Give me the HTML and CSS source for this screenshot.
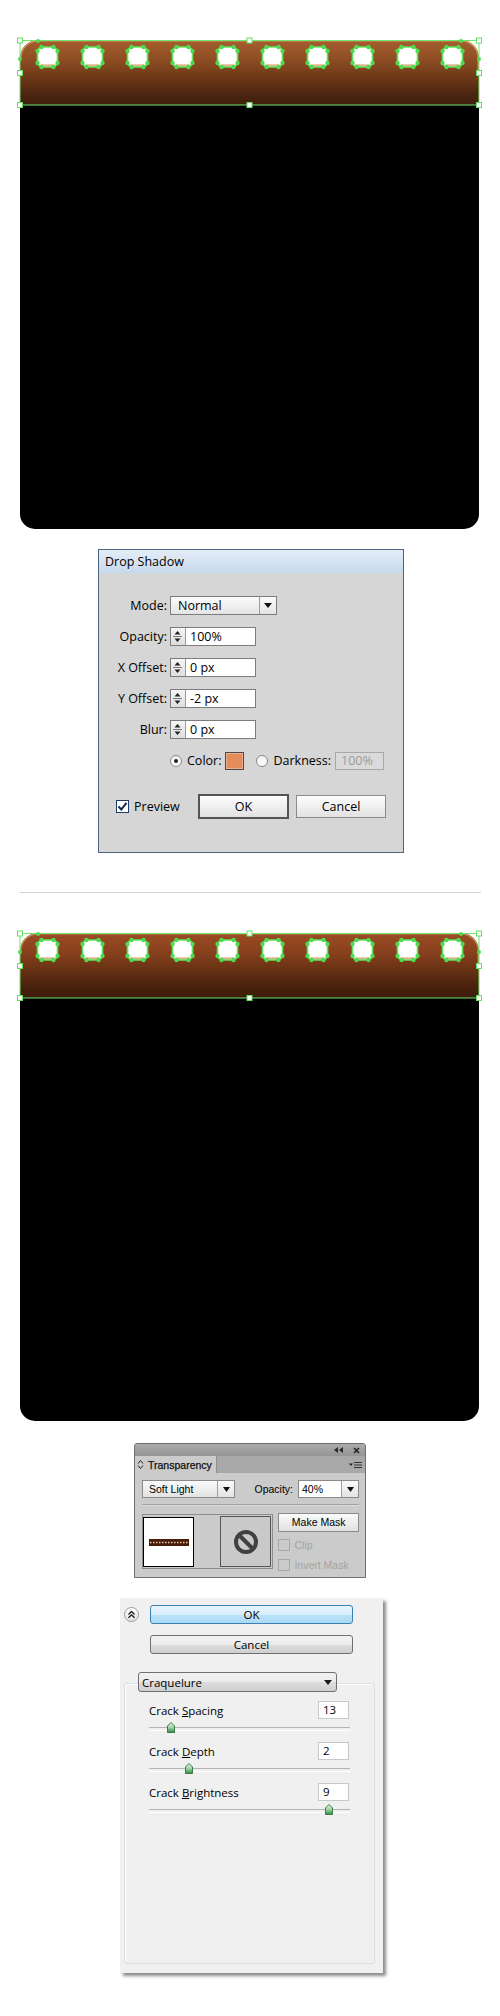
FILE: index.html
```html
<!DOCTYPE html>
<html>
<head>
<meta charset="utf-8">
<link rel="stylesheet" href="styles.css">
</head>
<body>
<div class="page">

  <div class="film">
    <svg class="film-head" width="459" height="65" viewBox="0 0 459 65">
      <defs>
        <linearGradient id="brA" x1="0" y1="0" x2="0" y2="1">
          <stop offset="0" stop-color="#a65e2e"/>
          <stop offset="0.3" stop-color="#8e4d23"/>
          <stop offset="0.6" stop-color="#6b3617"/>
          <stop offset="0.85" stop-color="#4a2410"/>
          <stop offset="1" stop-color="#40200d"/>
        </linearGradient>
        <g id="holeA">
          <rect x="0" y="0" width="20" height="20" rx="5" fill="#fff"/>
          <rect x="3" y="17.3" width="14" height="2.4" fill="#e2b48a"/>
          <rect x="0" y="0" width="20" height="20" rx="5" fill="none" stroke="#5fe35f" stroke-width="1.6"/>
          <circle cx="4" cy="0" r="2.2" fill="#4fdb4f"/><circle cx="16" cy="0" r="2.2" fill="#4fdb4f"/>
          <circle cx="20" cy="4" r="2.2" fill="#4fdb4f"/><circle cx="20" cy="16" r="2.2" fill="#4fdb4f"/>
          <circle cx="16" cy="20" r="2.2" fill="#4fdb4f"/><circle cx="4" cy="20" r="2.2" fill="#4fdb4f"/>
          <circle cx="0" cy="16" r="2.2" fill="#4fdb4f"/><circle cx="0" cy="4" r="2.2" fill="#4fdb4f"/>
        </g>
        <rect id="hdlA" x="-2.5" y="-2.5" width="5" height="5" fill="#fff" stroke="#5fe35f" stroke-width="1"/>
      </defs>
      <path d="M0,65 V18 A18,18 0 0 1 18,0 H441 A18,18 0 0 1 459,18 V65 Z" fill="url(#brA)"/>
      <path d="M0.8,20 V18 A17.2,17.2 0 0 1 18,0.8 H441 A17.2,17.2 0 0 1 458.2,18 V30" fill="none" stroke="#c99a62" stroke-width="1.4"/>
      <use href="#holeA" x="17.5" y="7"/><use href="#holeA" x="62.5" y="7"/>
      <use href="#holeA" x="107.5" y="7"/><use href="#holeA" x="152.5" y="7"/>
      <use href="#holeA" x="197.5" y="7"/><use href="#holeA" x="242.5" y="7"/>
      <use href="#holeA" x="287.5" y="7"/><use href="#holeA" x="332.5" y="7"/>
      <use href="#holeA" x="377.5" y="7"/><use href="#holeA" x="422.5" y="7"/>
      <rect x="0" y="0.5" width="459" height="64.5" fill="none" stroke="#6fe46f" stroke-width="1"/>
      <circle cx="18" cy="1" r="2" fill="#4fdb4f"/><circle cx="441" cy="1" r="2" fill="#4fdb4f"/>
      <circle cx="0" cy="19" r="2" fill="#4fdb4f"/><circle cx="459" cy="19" r="2" fill="#4fdb4f"/>
      <use href="#hdlA" x="0" y="0.5"/><use href="#hdlA" x="229.5" y="0.5"/><use href="#hdlA" x="459" y="0.5"/>
      <use href="#hdlA" x="0" y="33"/><use href="#hdlA" x="459" y="33"/>
      <use href="#hdlA" x="0" y="65"/><use href="#hdlA" x="229.5" y="65"/><use href="#hdlA" x="459" y="65"/>
    </svg>
    <div class="film-body"></div>
  </div>

  <div class="ds">
    <div class="ds-title">Drop Shadow</div>
    <div class="ds-body">
      <div class="ds-row">
        <span class="ds-label">Mode:</span>
        <div class="ds-select">
          <span class="ds-select-text">Normal</span>
          <span class="ds-select-btn"><svg width="8" height="5" viewBox="0 0 8 5"><path d="M0 0H8L4 5Z" fill="#111"/></svg></span>
        </div>
      </div>
      <div class="ds-row">
        <span class="ds-label">Opacity:</span>
        <div class="ds-spin">
          <span class="spin-btn"><svg width="13" height="17" viewBox="0 0 13 17"><path d="M3.5 6.5H9.5L6.5 3Z M3.5 10.5H9.5L6.5 14Z" fill="#222"/><path d="M2 8.5H11" stroke="#777" stroke-width="1"/></svg></span>
          <span class="spin-val">100%</span>
        </div>
      </div>
      <div class="ds-row">
        <span class="ds-label">X Offset:</span>
        <div class="ds-spin">
          <span class="spin-btn"><svg width="13" height="17" viewBox="0 0 13 17"><path d="M3.5 6.5H9.5L6.5 3Z M3.5 10.5H9.5L6.5 14Z" fill="#222"/><path d="M2 8.5H11" stroke="#777" stroke-width="1"/></svg></span>
          <span class="spin-val">0 px</span>
        </div>
      </div>
      <div class="ds-row">
        <span class="ds-label">Y Offset:</span>
        <div class="ds-spin">
          <span class="spin-btn"><svg width="13" height="17" viewBox="0 0 13 17"><path d="M3.5 6.5H9.5L6.5 3Z M3.5 10.5H9.5L6.5 14Z" fill="#222"/><path d="M2 8.5H11" stroke="#777" stroke-width="1"/></svg></span>
          <span class="spin-val">-2 px</span>
        </div>
      </div>
      <div class="ds-row">
        <span class="ds-label">Blur:</span>
        <div class="ds-spin">
          <span class="spin-btn"><svg width="13" height="17" viewBox="0 0 13 17"><path d="M3.5 6.5H9.5L6.5 3Z M3.5 10.5H9.5L6.5 14Z" fill="#222"/><path d="M2 8.5H11" stroke="#777" stroke-width="1"/></svg></span>
          <span class="spin-val">0 px</span>
        </div>
      </div>
      <div class="ds-row ds-colorrow">
        <span class="radio radio--on"></span>
        <span class="ds-txt">Color:</span>
        <span class="swatch"></span>
        <span class="radio radio--gap"></span>
        <span class="ds-txt">Darkness:</span>
        <span class="ds-disabled">100%</span>
      </div>
      <div class="ds-actions">
        <div class="ds-check">
          <span class="checkbox"><svg width="11" height="11" viewBox="0 0 11 11"><path d="M1.5 5.5L4.3 8.5L9.5 1.8" fill="none" stroke="#12284a" stroke-width="2"/></svg></span>
          <span>Preview</span>
        </div>
        <div class="btn-ok">OK</div>
        <div class="btn-cancel">Cancel</div>
      </div>
    </div>
  </div>

  <div class="rule"></div>

  <div class="film film--2">
    <svg class="film-head" width="459" height="65" viewBox="0 0 459 65">
      <defs>
        <linearGradient id="brB" x1="0" y1="0" x2="0" y2="1">
          <stop offset="0" stop-color="#9c4c24"/>
          <stop offset="0.3" stop-color="#87401c"/>
          <stop offset="0.6" stop-color="#643013"/>
          <stop offset="0.85" stop-color="#46200c"/>
          <stop offset="1" stop-color="#3d1c0a"/>
        </linearGradient>
        <g id="holeB">
          <rect x="0" y="0" width="20" height="20" rx="5" fill="#fff"/>
          <rect x="3" y="17.3" width="14" height="2.4" fill="#e2b48a"/>
          <rect x="0" y="0" width="20" height="20" rx="5" fill="none" stroke="#5fe35f" stroke-width="1.6"/>
          <circle cx="4" cy="0" r="2.2" fill="#4fdb4f"/><circle cx="16" cy="0" r="2.2" fill="#4fdb4f"/>
          <circle cx="20" cy="4" r="2.2" fill="#4fdb4f"/><circle cx="20" cy="16" r="2.2" fill="#4fdb4f"/>
          <circle cx="16" cy="20" r="2.2" fill="#4fdb4f"/><circle cx="4" cy="20" r="2.2" fill="#4fdb4f"/>
          <circle cx="0" cy="16" r="2.2" fill="#4fdb4f"/><circle cx="0" cy="4" r="2.2" fill="#4fdb4f"/>
        </g>
        <rect id="hdlB" x="-2.5" y="-2.5" width="5" height="5" fill="#fff" stroke="#5fe35f" stroke-width="1"/>
      </defs>
      <path d="M0,65 V18 A18,18 0 0 1 18,0 H441 A18,18 0 0 1 459,18 V65 Z" fill="url(#brB)"/>
      <path d="M0.8,20 V18 A17.2,17.2 0 0 1 18,0.8 H441 A17.2,17.2 0 0 1 458.2,18 V30" fill="none" stroke="#c08a58" stroke-width="1.4"/>
      <use href="#holeB" x="17.5" y="7"/><use href="#holeB" x="62.5" y="7"/>
      <use href="#holeB" x="107.5" y="7"/><use href="#holeB" x="152.5" y="7"/>
      <use href="#holeB" x="197.5" y="7"/><use href="#holeB" x="242.5" y="7"/>
      <use href="#holeB" x="287.5" y="7"/><use href="#holeB" x="332.5" y="7"/>
      <use href="#holeB" x="377.5" y="7"/><use href="#holeB" x="422.5" y="7"/>
      <rect x="0" y="0.5" width="459" height="64.5" fill="none" stroke="#6fe46f" stroke-width="1"/>
      <circle cx="18" cy="1" r="2" fill="#4fdb4f"/><circle cx="441" cy="1" r="2" fill="#4fdb4f"/>
      <circle cx="0" cy="19" r="2" fill="#4fdb4f"/><circle cx="459" cy="19" r="2" fill="#4fdb4f"/>
      <use href="#hdlB" x="0" y="0.5"/><use href="#hdlB" x="229.5" y="0.5"/><use href="#hdlB" x="459" y="0.5"/>
      <use href="#hdlB" x="0" y="33"/><use href="#hdlB" x="459" y="33"/>
      <use href="#hdlB" x="0" y="65"/><use href="#hdlB" x="229.5" y="65"/><use href="#hdlB" x="459" y="65"/>
    </svg>
    <div class="film-body"></div>
  </div>

  <div class="tp">
    <div class="tp-top">
      <svg width="9" height="6" viewBox="0 0 9 6"><path d="M0 3L4 0V6Z M5 3L9 0V6Z" fill="#2a2a2a"/></svg>
      <svg width="7" height="7" viewBox="0 0 7 7"><path d="M1 1L6 6M6 1L1 6" stroke="#222" stroke-width="1.6"/></svg>
    </div>
    <div class="tp-tabs">
      <div class="tp-tab">
        <svg width="7" height="11" viewBox="0 0 7 11"><path d="M1 4.5L3.5 1.5L6 4.5M1 6.5L3.5 9.5L6 6.5" fill="none" stroke="#222" stroke-width="1"/></svg>
        <span>Transparency</span>
      </div>
      <div class="tp-tabfill">
        <svg width="13" height="8" viewBox="0 0 13 8"><path d="M0 2.5H4L2 5Z" fill="#222"/><path d="M5 1.5H13M5 4H13M5 6.5H13" stroke="#333" stroke-width="1"/></svg>
      </div>
    </div>
    <div class="tp-body">
      <div class="tp-row1">
        <div class="tp-select">
          <span class="tp-select-text">Soft Light</span>
          <span class="tp-select-btn"><svg width="7" height="5" viewBox="0 0 7 5"><path d="M0 0H7L3.5 5Z" fill="#111"/></svg></span>
        </div>
        <div class="tp-op">
          <span class="tp-op-label">Opacity:</span>
          <div class="tp-op-field">
            <span class="tp-op-val">40%</span>
            <span class="tp-select-btn"><svg width="7" height="5" viewBox="0 0 7 5"><path d="M0 0H7L3.5 5Z" fill="#111"/></svg></span>
          </div>
        </div>
      </div>
      <div class="tp-sep"></div>
      <div class="tp-row2">
        <div class="tp-frame">
          <div class="tp-thumb">
            <svg width="40" height="7" viewBox="0 0 40 7"><rect width="40" height="7" fill="#4a1d0a"/><path d="M1 3.5H39" stroke="#e8c6a6" stroke-width="1.4" stroke-dasharray="1.5 1.5"/></svg>
          </div>
          <div class="tp-mask">
            <svg width="26" height="26" viewBox="0 0 26 26"><circle cx="13" cy="13" r="10" fill="none" stroke="#404040" stroke-width="4"/><path d="M6 6L20 20" stroke="#404040" stroke-width="4"/></svg>
          </div>
        </div>
        <div class="tp-side">
          <div class="tp-btn">Make Mask</div>
          <div class="tp-chk"><span class="tp-box"></span><span>Clip</span></div>
          <div class="tp-chk"><span class="tp-box"></span><span>Invert Mask</span></div>
        </div>
      </div>
    </div>
  </div>

  <div class="cq">
    <div class="cq-top">
      <span class="cq-chev"><svg width="9" height="9" viewBox="0 0 9 9"><path d="M1.5 4.5L4.5 1.5L7.5 4.5M1.5 7.8L4.5 4.8L7.5 7.8" fill="none" stroke="#1a1a1a" stroke-width="1.3"/></svg></span>
      <div class="cq-ok">OK</div>
    </div>
    <div class="cq-cancel">Cancel</div>
    <div class="cq-group">
      <div class="cq-select">
        <span>Craquelure</span>
        <svg width="8" height="5" viewBox="0 0 8 5"><path d="M0 0H8L4 5Z" fill="#1a1a1a"/></svg>
      </div>
      <div class="cq-row">
        <span>Crack <u>S</u>pacing</span>
        <span class="cq-input">13</span>
      </div>
      <div class="cq-slider">
        <span class="cq-thumb" style="left: 18px"><svg width="8" height="11" viewBox="0 0 8 11"><defs><linearGradient id="tg1" x1="0" y1="0" x2="0" y2="1"><stop offset="0" stop-color="#e8f6ea"/><stop offset="0.5" stop-color="#9fd3a6"/><stop offset="1" stop-color="#2f8a45"/></linearGradient></defs><path d="M0.5 10.5V4L4 0.5L7.5 4V10.5Z" fill="url(#tg1)" stroke="#3c7a4a" stroke-width="1"/></svg></span>
      </div>
      <div class="cq-row">
        <span>Crack <u>D</u>epth</span>
        <span class="cq-input">2</span>
      </div>
      <div class="cq-slider">
        <span class="cq-thumb" style="left: 36px"><svg width="8" height="11" viewBox="0 0 8 11"><path d="M0.5 10.5V4L4 0.5L7.5 4V10.5Z" fill="url(#tg1)" stroke="#3c7a4a" stroke-width="1"/></svg></span>
      </div>
      <div class="cq-row">
        <span>Crack <u>B</u>rightness</span>
        <span class="cq-input">9</span>
      </div>
      <div class="cq-slider">
        <span class="cq-thumb" style="left: 176px"><svg width="8" height="11" viewBox="0 0 8 11"><path d="M0.5 10.5V4L4 0.5L7.5 4V10.5Z" fill="url(#tg1)" stroke="#3c7a4a" stroke-width="1"/></svg></span>
      </div>
    </div>
  </div>

</div>
</body>
</html>
```

FILE: styles.css
```css
* { box-sizing: border-box; }

body {
  margin: 0;
  background: #fff;
  font-family: "Open Sans", "Liberation Sans", sans-serif;
  color: #000;
}

.page {
  display: flex;
  flex-direction: column;
  align-items: flex-start;
  padding-top: 40px;
  padding-bottom: 43px;
}

/* ---------- film strips ---------- */
.film {
  margin-left: 20px;
  width: 459px;
}
.film-head {
  display: block;
  overflow: visible;
}
.film-body {
  height: 424px;
  background: #000;
  border-radius: 0 0 15px 15px;
}
.film--2 { margin-top: 40px; }
.film--2 .film-body { height: 423px; }

.rule {
  margin: 39px 0 0 20px;
  width: 461px;
  height: 1px;
  background: #d3d3d3;
}

/* ---------- Drop Shadow dialog ---------- */
.ds {
  margin: 20px 0 0 98px;
  width: 306px;
  height: 304px;
  border: 1px solid #4b6483;
  background: #d6d6d6;
  font-size: 12.5px;
}
.ds-title {
  height: 23px;
  line-height: 23px;
  padding-left: 6px;
  background: linear-gradient(#e4edf7, #c8d9ed);
}
.ds-body { padding-top: 23px; }
.ds-row {
  display: flex;
  align-items: center;
  height: 19px;
  margin-bottom: 12px;
}
.ds-label {
  width: 68px;
  margin-right: 3px;
  text-align: right;
  white-space: nowrap;
}
.ds-select {
  display: flex;
  width: 107px;
  height: 19px;
  border: 1px solid #7c7c7c;
  background: linear-gradient(#fbfbfb, #e4e4e4);
}
.ds-select-text {
  flex: 1;
  padding-left: 7px;
  line-height: 17px;
}
.ds-select-btn {
  width: 17px;
  border-left: 1px solid #9b9b9b;
  display: flex;
  align-items: center;
  justify-content: center;
}
.ds-spin {
  display: flex;
  width: 86px;
  height: 19px;
  border: 1px solid #7c7c7c;
  background: #fff;
}
.spin-btn {
  display: flex;
  width: 15px;
  border-right: 1px solid #9b9b9b;
  background: linear-gradient(#f6f6f6, #dedede);
}
.spin-val {
  padding-left: 4px;
  line-height: 17px;
}

.ds-colorrow {
  padding-left: 71px;
  margin-bottom: 24px;
}
.radio {
  width: 12px;
  height: 12px;
  border-radius: 50%;
  border: 1px solid #8a8a8a;
  background: linear-gradient(#f0f0f0, #ffffff);
  margin-right: 5px;
  display: flex;
  align-items: center;
  justify-content: center;
}
.radio--on::after {
  content: "";
  width: 4px;
  height: 4px;
  border-radius: 50%;
  background: #222;
}
.radio--gap { margin-left: 12px; }
.ds-txt { margin-right: 4px; }
.swatch {
  width: 19px;
  height: 18px;
  border: 1px solid #4a4a4a;
  background: #e38d5d;
  box-shadow: inset 0 0 0 1px #f0b090;
}
.ds-disabled {
  width: 49px;
  height: 18px;
  border: 1px solid #a9a9a9;
  background: #dadada;
  color: #9a9a9a;
  padding-left: 5px;
  line-height: 16px;
}

.ds-actions {
  display: flex;
  align-items: center;
  padding-left: 17px;
  height: 25px;
}
.ds-check {
  display: flex;
  align-items: center;
  width: 82px;
  flex: none;
}
.checkbox {
  width: 13px;
  height: 13px;
  border: 1px solid #1d3c6a;
  background: #fff;
  margin-right: 5px;
  display: flex;
  align-items: center;
  justify-content: center;
}
.btn-ok {
  width: 91px;
  height: 25px;
  border: 2px solid #545454;
  background: linear-gradient(#fdfdfd, #e2e2e2);
  text-align: center;
  line-height: 21px;
}
.btn-cancel {
  width: 90px;
  height: 23px;
  margin-left: 7px;
  border: 1px solid #8a8a8a;
  background: linear-gradient(#fdfdfd, #e2e2e2);
  text-align: center;
  line-height: 21px;
}

/* ---------- Transparency panel ---------- */
.tp {
  margin: 22px 0 0 134px;
  width: 232px;
  height: 135px;
  border: 1px solid #6e6e6e;
  border-radius: 3px 3px 0 0;
  background: #cbcbcb;
  font-family: "Liberation Sans", Arial, sans-serif;
  font-size: 10.5px;
  overflow: hidden;
}
.tp-top {
  height: 12px;
  background: linear-gradient(#ababab, #959595);
  display: flex;
  align-items: center;
  justify-content: flex-end;
  gap: 10px;
  padding-right: 5px;
}
.tp-tabs {
  display: flex;
  height: 17px;
  background: #a8a8a8;
}
.tp-tab {
  width: 82px;
  display: flex;
  align-items: center;
  gap: 4px;
  padding-left: 2px;
  background: #cbcbcb;
  border-right: 1px solid #8d8d8d;
  color: #111;
  -webkit-text-stroke: 0.25px #111;
}
.tp-tabfill {
  flex: 1;
  display: flex;
  align-items: center;
  justify-content: flex-end;
  padding-right: 3px;
}
.tp-body { padding: 7px 6px 0 7px; }
.tp-row1 {
  display: flex;
  justify-content: space-between;
  align-items: center;
  height: 18px;
}
.tp-select {
  display: flex;
  width: 93px;
  height: 18px;
  border: 1px solid #8a8a8a;
  background: linear-gradient(#fafafa, #e3e3e3);
}
.tp-select-text {
  flex: 1;
  padding-left: 6px;
  line-height: 16px;
}
.tp-select-btn {
  width: 17px;
  border-left: 1px solid #9e9e9e;
  display: flex;
  align-items: center;
  justify-content: center;
  background: linear-gradient(#fafafa, #e3e3e3);
}
.tp-op {
  display: flex;
  align-items: center;
}
.tp-op-label { margin-right: 5px; }
.tp-op-field {
  display: flex;
  width: 61px;
  height: 18px;
  border: 1px solid #8a8a8a;
  background: #fff;
}
.tp-op-val {
  flex: 1;
  padding-left: 3px;
  line-height: 16px;
}
.tp-sep {
  margin: 6px 0 0 0;
  height: 2px;
  border-top: 1px solid #a2a2a2;
  border-bottom: 1px solid #dcdcdc;
}
.tp-row2 {
  display: flex;
  margin-top: 7px;
}
.tp-frame {
  display: flex;
  width: 132px;
  height: 55px;
  margin-top: 1px;
  border: 1px solid #8c8c8c;
}
.tp-thumb {
  width: 51px;
  height: 50px;
  margin-top: 2px;
  border: 1px solid #000;
  background: #fff;
  display: flex;
  align-items: center;
  justify-content: center;
}
.tp-mask {
  width: 51px;
  height: 51px;
  margin: 1px 0 0 26px;
  border: 1px solid #555;
  background: #c9c9c9;
  display: flex;
  align-items: center;
  justify-content: center;
}
.tp-side {
  margin-left: 5px;
  width: 81px;
}
.tp-btn {
  height: 19px;
  border: 1px solid #8a8a8a;
  background: linear-gradient(#fbfbfb, #e0e0e0);
  text-align: center;
  line-height: 17px;
}
.tp-chk {
  display: flex;
  align-items: center;
  margin-top: 7px;
  color: #a3a3a3;
  height: 12px;
}
.tp-chk + .tp-chk { margin-top: 8px; }
.tp-box {
  width: 12px;
  height: 12px;
  border: 1px solid #a8a8a8;
  margin-right: 4px;
}

/* ---------- Craquelure panel ---------- */
.cq {
  margin: 20px 0 0 120px;
  width: 263px;
  height: 375px;
  background: #f0f0f0;
  box-shadow: 3px 3px 3px rgba(0, 0, 0, 0.45);
  font-size: 11.5px;
  padding-top: 7px;
}
.cq-top {
  display: flex;
  align-items: center;
  padding-left: 4px;
}
.cq-chev {
  width: 15px;
  height: 15px;
  border-radius: 50%;
  border: 1px solid #9a9a9a;
  background: linear-gradient(#ffffff, #e2e2e2);
  display: flex;
  align-items: center;
  justify-content: center;
  margin-right: 11px;
}
.cq-ok, .cq-cancel {
  width: 203px;
  height: 19px;
  border-radius: 3px;
  text-align: center;
  line-height: 17px;
}
.cq-ok {
  border: 1px solid #3c7fb1;
  background: linear-gradient(#e6f5fd 0%, #d7effc 50%, #bde4f8 51%, #a8d9f4 100%);
}
.cq-cancel {
  margin: 11px 0 0 30px;
  border: 1px solid #707070;
  background: linear-gradient(#f2f2f2 0%, #ebebeb 50%, #dddddd 51%, #cfcfcf 100%);
}
.cq-group {
  margin: 29px 0 0 4px;
  width: 251px;
  height: 281px;
  border: 1px solid #d5dfe5;
  border-radius: 3px;
  box-shadow: inset 1px 1px 0 #fff;
  padding: 0 25px 0 24px;
}
.cq-select {
  display: flex;
  align-items: center;
  justify-content: space-between;
  width: 199px;
  height: 20px;
  margin: -12px 0 0 -11px;
  padding: 0 4px 0 3px;
  border: 1px solid #707070;
  border-radius: 3px;
  background: linear-gradient(#f2f2f2 0%, #ebebeb 50%, #dddddd 51%, #cfcfcf 100%);
}
.cq-row {
  display: flex;
  justify-content: space-between;
  align-items: center;
  height: 18px;
  margin-top: 9px;
}
.cq-row:first-of-type { margin-top: 9px; }
.cq-input {
  width: 31px;
  height: 18px;
  border: 1px solid #c5c8cc;
  background: #fff;
  padding-left: 4px;
  line-height: 16px;
}
.cq-slider {
  position: relative;
  width: 201px;
  height: 11px;
  margin-top: 3px;
}
.cq-slider::before {
  content: "";
  position: absolute;
  left: 0;
  right: 0;
  top: 5px;
  height: 2px;
  border-top: 1px solid #b4b4b4;
  border-bottom: 1px solid #fff;
}
.cq-thumb {
  position: absolute;
  top: 0;
  display: block;
  width: 8px;
  height: 11px;
}
.cq-thumb svg { display: block; }
```
